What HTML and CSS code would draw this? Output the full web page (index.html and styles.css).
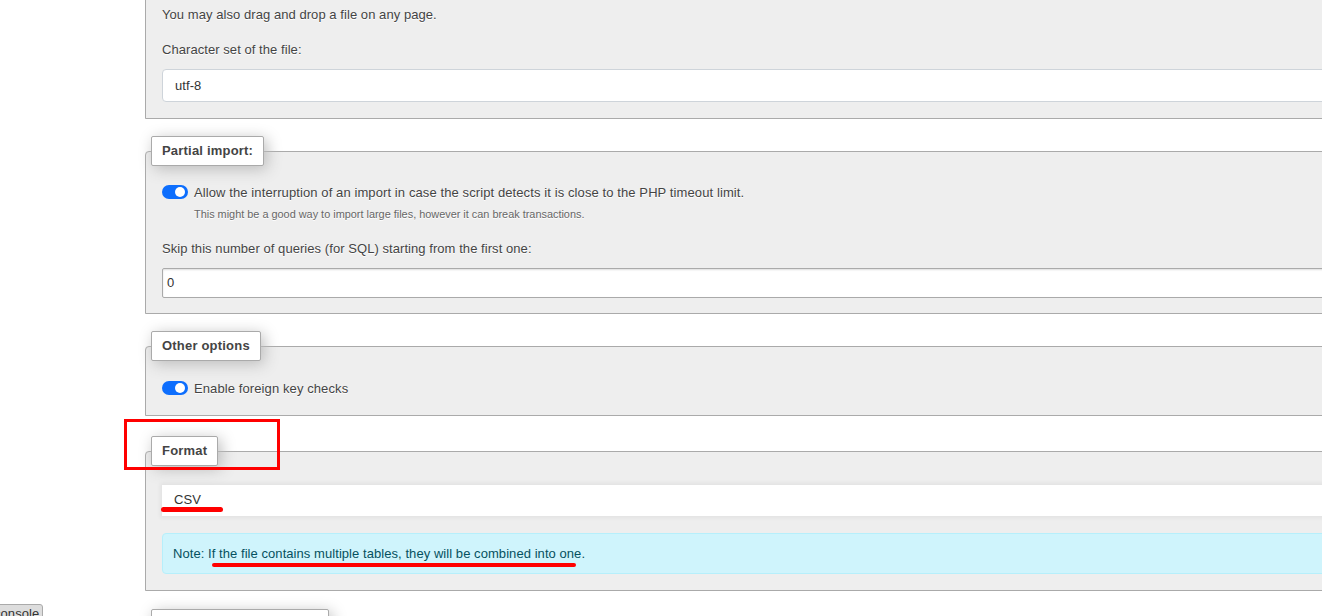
FILE: index.html
```html
<!DOCTYPE html>
<html lang="en">
<head>
<meta charset="utf-8">
<title>Import</title>
<link rel="stylesheet" href="styles.css">
</head>
<body>
<div class="page">
  <fieldset class="fs fs-first">
    <div class="line">You may also drag and drop a file on any page.</div>
    <div class="label label-charset">Character set of the file:</div>
    <div class="select-box">utf-8</div>
  </fieldset>

  <fieldset class="fs fs-partial">
    <legend>Partial import:</legend>
    <div class="check"><span class="switch"></span><span>Allow the interruption of an import in case the script detects it is close to the PHP timeout limit.</span></div>
    <div class="hint">This might be a good way to import large files, however it can break transactions.</div>
    <div class="label label-skip">Skip this number of queries (for SQL) starting from the first one:</div>
    <div class="text-input">0</div>
  </fieldset>

  <fieldset class="fs fs-other">
    <legend>Other options</legend>
    <div class="check"><span class="switch"></span><span>Enable foreign key checks</span></div>
  </fieldset>

  <fieldset class="fs fs-format">
    <legend>Format</legend>
    <div class="format-select">CSV</div>
    <div class="note">Note: If the file contains multiple tables, they will be combined into one.</div>
    <div class="mark mark-box"></div>
    <div class="mark line-csv"></div>
    <div class="mark line-note"></div>
  </fieldset>

  <fieldset class="fs fs-specific">
    <legend>Format-specific options:</legend>
    <div class="line">&nbsp;</div>
  </fieldset>
</div>
<div class="console-btn">console</div>
</body>
</html>
```

FILE: styles.css
```css
html, body {
  margin: 0;
  padding: 0;
  background: #fff;
  overflow: hidden;
  height: 616px;
}

body {
  font-family: "Liberation Sans", Arial, sans-serif;
  font-size: 13px;
  letter-spacing: 0.06px;
  color: #444;
}

.page {
  padding-left: 145px;
  width: 1260px;
}

.fs {
  position: relative;
  margin: 17px 0 0 0;
  padding: 16px 16px 15px 16px;
  border: 1px solid #aaa;
  border-radius: 4px 4px 0 0;
  background: #eee;
  text-shadow: 0 1px 0 #fff;
  min-width: 0;
}

.fs legend {
  margin-left: -11px;
  padding: 5px 10px;
  line-height: 18px;
  font-weight: bold;
  letter-spacing: 0.2px;
  color: #444;
  background: #fff;
  border: 1px solid #aaa;
  border-radius: 2px;
  box-shadow: 3px 3px 15px #bbb;
  text-shadow: none;
}

.fs-first {
  margin-top: -20px;
  padding-top: 25px;
  padding-bottom: 16px;
}

.line {
  line-height: 18px;
}

.label {
  line-height: 18px;
}

.label-charset {
  margin-top: 17px;
}

.select-box {
  margin-top: 10px;
  height: 31px;
  line-height: 31px;
  padding-left: 12px;
  background: #fff;
  border: 1px solid #ced4da;
  border-radius: 4px;
  color: #333;
  text-shadow: none;
}

.check {
  display: flex;
  align-items: center;
  gap: 6px;
  height: 20px;
}

.check span:last-child {
  letter-spacing: 0.1px;
}

.switch {
  position: relative;
  flex: none;
  width: 26px;
  height: 14px;
  border-radius: 7px;
  background: #0d6efd;
}

.switch::after {
  content: "";
  position: absolute;
  right: 3px;
  top: 2px;
  width: 10px;
  height: 10px;
  border-radius: 50%;
  background: #fff;
}

.hint {
  margin-top: 5px;
  padding-left: 32px;
  font-size: 10.9px;
  letter-spacing: 0;
  line-height: 14px;
  color: #666;
}

.label-skip {
  margin-top: 19px;
}

.text-input {
  margin-top: 10px;
  height: 28px;
  line-height: 28px;
  padding-left: 4px;
  background: #fff;
  border: 1px solid #aaa;
  border-radius: 2px;
  box-shadow: inset 0 1px 2px #ddd;
  color: #333;
  text-shadow: none;
}

.fs-other {
  padding-top: 17px;
  padding-bottom: 17px;
}

.fs-format {
  margin-top: 20px;
  padding-top: 19px;
  padding-bottom: 16px;
}

.format-select {
  height: 31px;
  line-height: 29px;
  padding-left: 12px;
  background: #fff;
  box-shadow: 0 0 4px 2px rgba(0, 0, 0, 0.05);
  color: #333;
  text-shadow: none;
}

.note {
  margin-top: 17px;
  height: 39px;
  line-height: 39px;
  padding-left: 10px;
  background: #cff4fc;
  border: 1px solid #b6effb;
  border-radius: 4px;
  color: #055160;
  text-shadow: none;
}

.mark {
  position: absolute;
  pointer-events: none;
}

.mark-box {
  left: -22px;
  top: -47px;
  width: 150px;
  height: 45px;
  border: 3px solid #f00;
}

.line-csv {
  left: 15px;
  top: 41px;
  width: 62px;
  height: 5px;
  border-radius: 3px;
  background: #f00;
}

.line-note {
  left: 66px;
  top: 97px;
  width: 364px;
  height: 4px;
  border-radius: 2px;
  background: #f00;
}

.fs-specific {
  margin-top: 18px;
  height: 60px;
}

.console-btn {
  position: fixed;
  left: -12px;
  top: 604px;
  padding: 2px 3px 6px 5px;
  background: #ddd;
  border: 1px solid #aaa;
  border-radius: 3px 3px 0 0;
  font-size: 13px;
  color: #333;
  line-height: 14px;
}
```
